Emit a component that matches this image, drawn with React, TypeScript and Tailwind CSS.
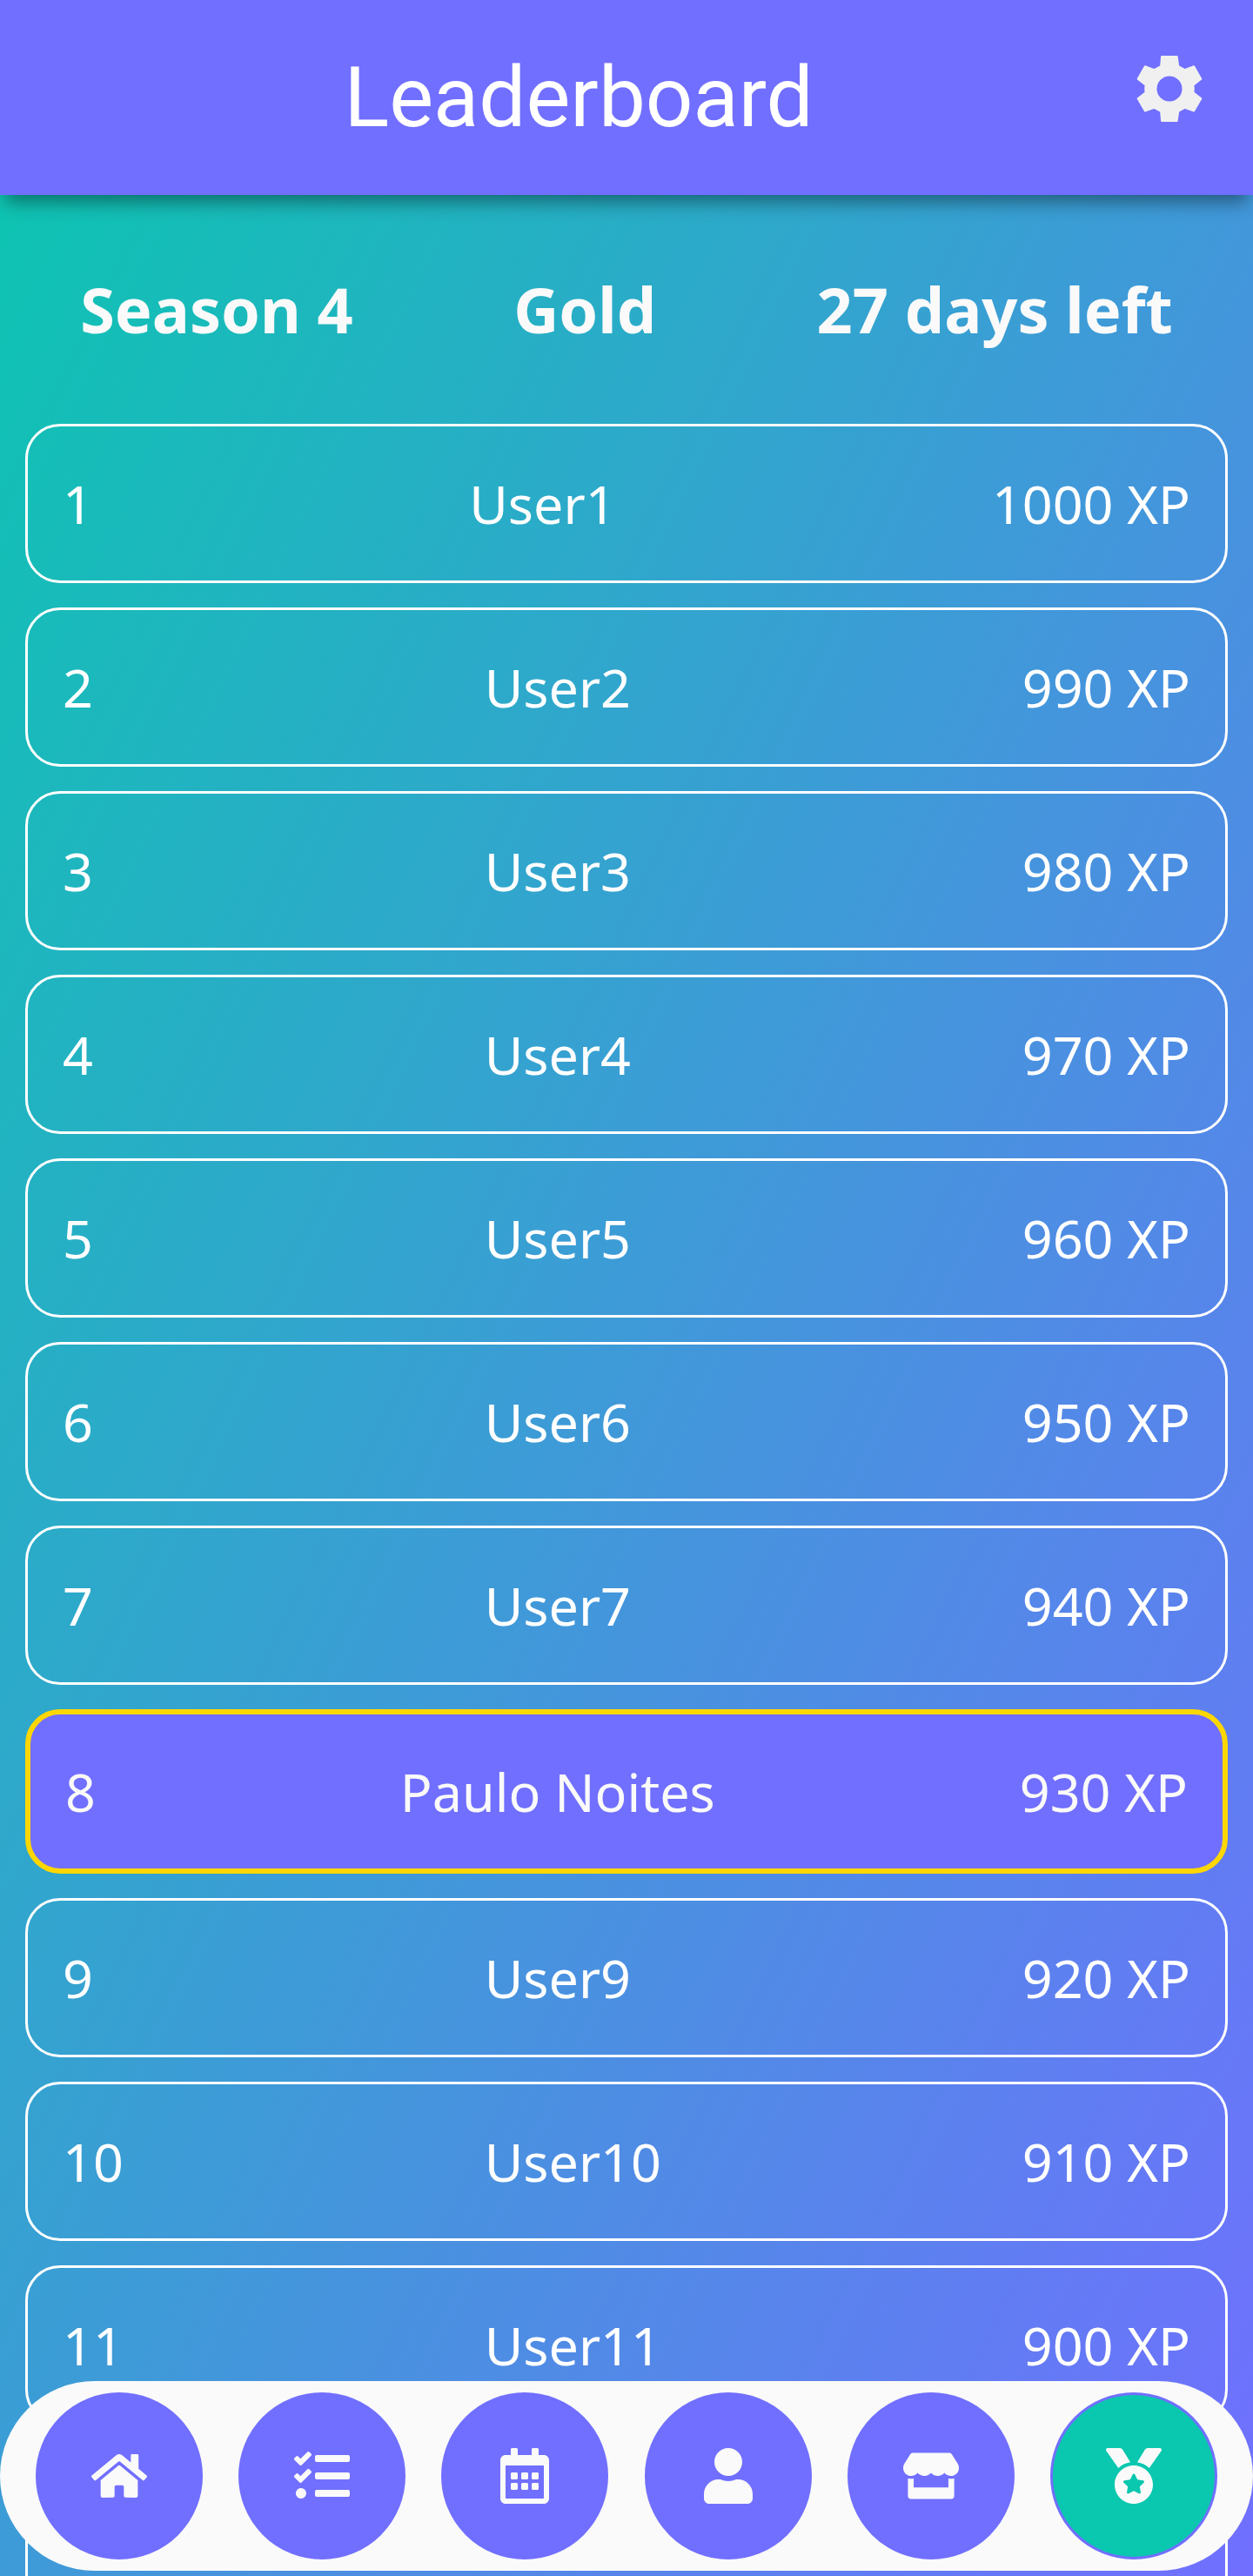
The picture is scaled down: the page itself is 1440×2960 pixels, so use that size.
import type { IconType } from "react-icons";
import {
  FaHome,
  FaMedal,
  FaRegCalendarAlt,
  FaStore,
  FaTasks,
  FaUser,
} from "react-icons/fa";

type Player = { rank: number; name: string; xp: number; current?: boolean };

const players: Player[] = [
  { rank: 1, name: "User1", xp: 1000 },
  { rank: 2, name: "User2", xp: 990 },
  { rank: 3, name: "User3", xp: 980 },
  { rank: 4, name: "User4", xp: 970 },
  { rank: 5, name: "User5", xp: 960 },
  { rank: 6, name: "User6", xp: 950 },
  { rank: 7, name: "User7", xp: 940 },
  { rank: 8, name: "Paulo Noites", xp: 930, current: true },
  { rank: 9, name: "User9", xp: 920 },
  { rank: 10, name: "User10", xp: 910 },
  { rank: 11, name: "User11", xp: 900 },
  { rank: 12, name: "User12", xp: 890 },
];

const tabs: { label: string; Icon: IconType; active?: boolean }[] = [
  { label: "Home", Icon: FaHome },
  { label: "Tasks", Icon: FaTasks },
  { label: "Calendar", Icon: FaRegCalendarAlt },
  { label: "Profile", Icon: FaUser },
  { label: "Shop", Icon: FaStore },
  { label: "Leaderboard", Icon: FaMedal, active: true },
];

function GearIcon() {
  return (
    <svg viewBox="136 99 232 236" className="h-[78px] w-[78px]" aria-hidden="true">
      <path
        fill="#f0f0f0"
        stroke="#f0f0f0"
        strokeWidth="6"
        strokeLinejoin="round"
        fillRule="evenodd"
        d="M225 105H278L283 139L305 151L337 139L362 183L335 204Q337 217 335 230L362 251L337 294L305 283L283 295L278 329H225L222 295L199 283L167 294L142 251L169 230Q167 217 169 204L142 183L167 139L199 151L222 139ZM252 170A47 47 0 1 0 252 264A47 47 0 1 0 252 170Z"
      />
    </svg>
  );
}

function Header() {
  return (
    <header className="relative z-10 flex h-[224px] shrink-0 items-center bg-[#716fff] pr-8 pl-[50px] shadow-[0_14px_20px_-6px_rgba(0,0,0,0.42)]">
      <h1 className="flex-1 text-center font-[Roboto,sans-serif] text-[96px] leading-[112px] text-white">
        Leaderboard
      </h1>
      <button
        type="button"
        aria-label="Settings"
        className="flex w-[128px] items-center justify-center pb-5"
      >
        <GearIcon />
      </button>
    </header>
  );
}

function PlayerRow({ player }: { player: Player }) {
  const look = player.current
    ? "border-[6px] border-[#ffd700] bg-[#716fff] text-[#fafafa]"
    : "border-[3px] border-white text-white";
  return (
    <li
      className={`flex items-center justify-between rounded-[40px] px-10 py-12 text-[61px] leading-[81px] ${look}`}
    >
      <span>{player.rank}</span>
      <span>{player.name}</span>
      <span>{player.xp} XP</span>
    </li>
  );
}

function TabBar() {
  return (
    <nav className="fixed inset-x-0 bottom-[6px] z-20 flex justify-evenly rounded-full bg-[#fafafa] py-[13px]">
      {tabs.map(({ label, Icon, active }) => (
        <button
          key={label}
          type="button"
          aria-label={label}
          aria-current={active ? "page" : undefined}
          className={`flex size-[192px] items-center justify-center rounded-full border-[3px] border-[#716fff] text-[#fafafa] ${
            active ? "bg-[#0ac7af]" : "bg-[#716fff]"
          }`}
        >
          <Icon className="size-16" aria-hidden="true" />
        </button>
      ))}
    </nav>
  );
}

export default function App() {
  return (
    <div className="flex h-screen flex-col overflow-hidden bg-[linear-gradient(to_bottom_right,#0ac7af,#716fff)] font-['Noto_Sans','Open_Sans',sans-serif]">
      <Header />
      <main className="min-h-0 flex-1">
        <section
          aria-label="Season"
          className="flex justify-around py-20 text-[72px] leading-[103px] font-bold text-[#fafafa]"
        >
          <p>Season 4</p>
          <p>Gold</p>
          <p>27 days left</p>
        </section>
        <ol className="flex flex-col gap-7 px-[29px]">
          {players.map((player) => (
            <PlayerRow key={player.rank} player={player} />
          ))}
        </ol>
      </main>
      <TabBar />
    </div>
  );
}
